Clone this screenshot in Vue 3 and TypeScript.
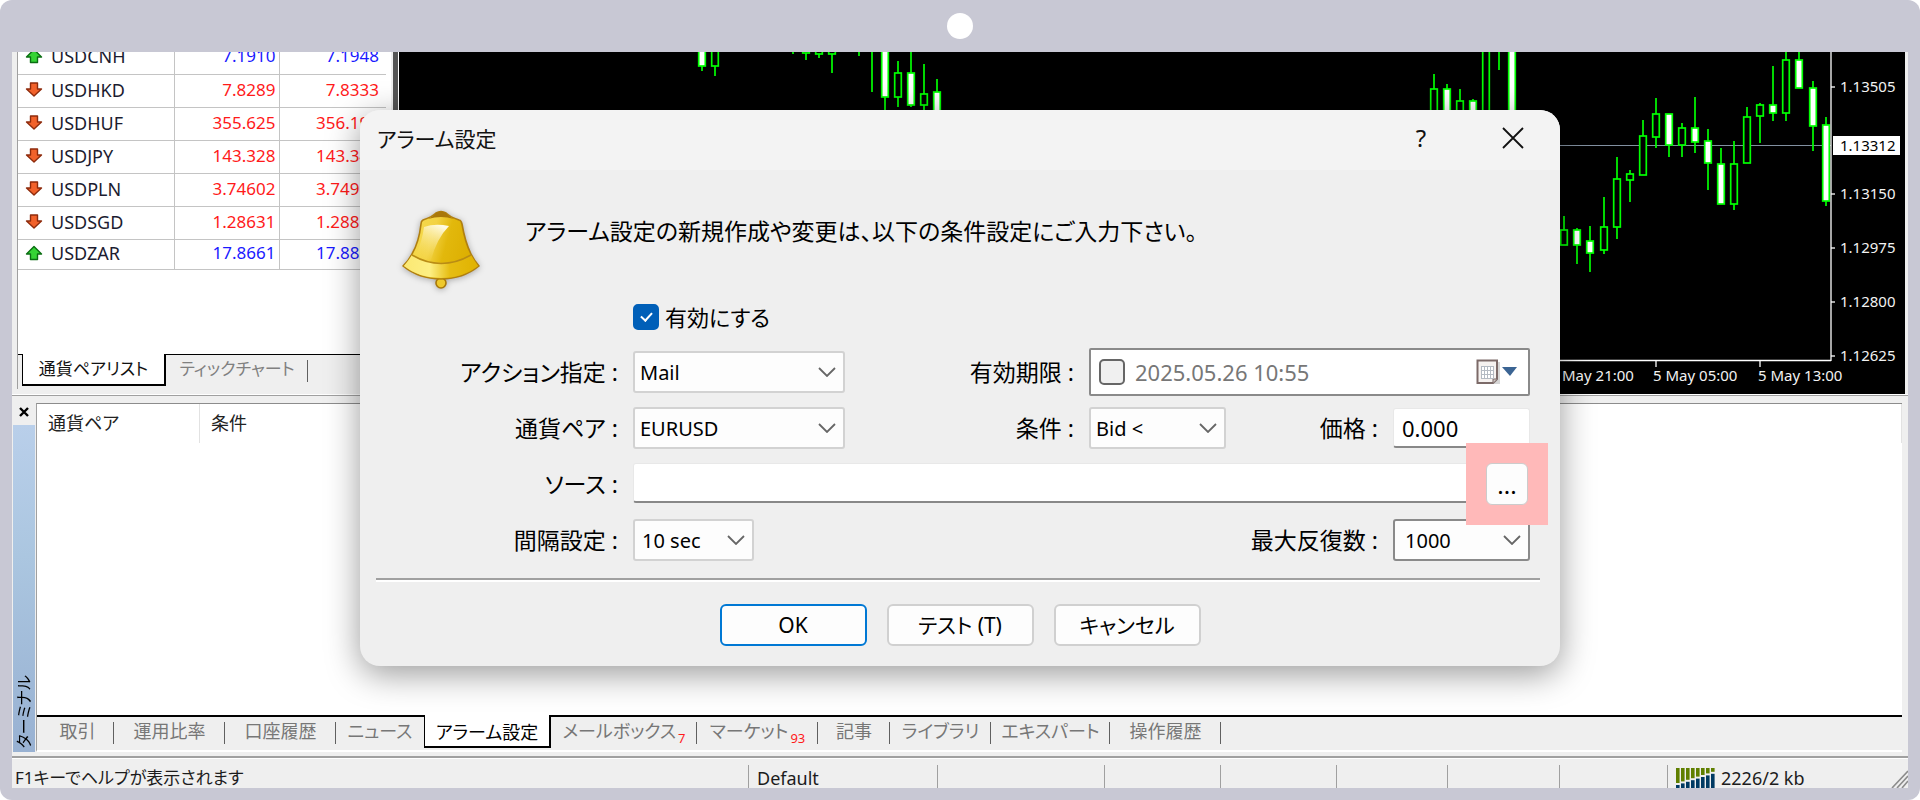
<script setup lang="ts">
import { ref } from 'vue'

interface Quote { symbol: string; bid: string; ask: string; up: boolean }
interface Candle { x: number; high: number; top: number; bottom: number; low: number; filled: boolean }
interface Tab { label: string; width: number; badge?: string; active?: boolean }

const quotes: Quote[] = [
  { symbol: 'USDCNH', bid: '7.1910', ask: '7.1948', up: true },
  { symbol: 'USDHKD', bid: '7.8289', ask: '7.8333', up: false },
  { symbol: 'USDHUF', bid: '355.625', ask: '356.190', up: false },
  { symbol: 'USDJPY', bid: '143.328', ask: '143.340', up: false },
  { symbol: 'USDPLN', bid: '3.74602', ask: '3.74900', up: false },
  { symbol: 'USDSGD', bid: '1.28631', ask: '1.28810', up: false },
  { symbol: 'USDZAR', bid: '17.8661', ask: '17.8810', up: true },
]

const c = (x: number, high: number, top: number, bottom: number, low: number, filled: boolean): Candle =>
  ({ x, high, top, bottom, low, filled })

const candles: Candle[] = [
  c(702, 40, 40, 66, 71, true),
  c(715, 40, 40, 66, 76, false),
  c(793, 40, 40, 41, 54, false),
  c(806, 40, 40, 53, 60, false),
  c(819, 40, 40, 54, 58, false),
  c(832, 40, 40, 54, 73, false),
  c(859, 40, 40, 41, 56, false),
  c(872, 40, 40, 41, 92, false),
  c(885, 40, 40, 97, 112, true),
  c(898, 61, 73, 97, 107, false),
  c(911, 40, 73, 105, 107, true),
  c(924, 64, 94, 105, 112, false),
  c(937, 79, 92, 125, 125, true),
  c(1434, 74, 89, 125, 125, false),
  c(1447, 84, 89, 125, 125, true),
  c(1460, 89, 101, 125, 125, false),
  c(1473, 99, 101, 125, 125, true),
  c(1486, 40, 40, 125, 125, false),
  c(1499, 40, 40, 41, 70, false),
  c(1512, 40, 40, 125, 125, true),
  c(1564, 216, 230, 245, 245, false),
  c(1577, 228, 230, 245, 264, true),
  c(1590, 226, 241, 253, 272, true),
  c(1604, 197, 227, 250, 254, false),
  c(1617, 157, 179, 227, 239, false),
  c(1630, 170, 174, 180, 202, false),
  c(1643, 120, 136, 175, 175, false),
  c(1656, 98, 114, 137, 148, false),
  c(1669, 114, 114, 145, 157, true),
  c(1682, 123, 128, 145, 157, false),
  c(1695, 97, 128, 142, 153, true),
  c(1708, 129, 141, 163, 190, true),
  c(1721, 148, 164, 204, 204, true),
  c(1734, 141, 164, 204, 210, false),
  c(1747, 107, 117, 163, 163, false),
  c(1760, 103, 105, 116, 143, false),
  c(1773, 66, 105, 113, 121, true),
  c(1786, 40, 60, 113, 121, false),
  c(1799, 40, 60, 88, 88, true),
  c(1813, 81, 88, 126, 151, true),
  c(1826, 117, 125, 201, 206, true),
]

const prices = [
  { label: '1.13505', y: 87 },
  { label: '1.13150', y: 194 },
  { label: '1.12975', y: 248 },
  { label: '1.12800', y: 302 },
  { label: '1.12625', y: 356 },
]
const times = [
  { label: 'May 21:00', x: 1562 },
  { label: '5 May 05:00', x: 1653 },
  { label: '5 May 13:00', x: 1758 },
]

const terminalTabs: Tab[] = [
  { label: '取引', width: 73 },
  { label: '運用比率', width: 111 },
  { label: '口座履歴', width: 111 },
  { label: 'ニュース', width: 88 },
  { label: 'アラーム設定', width: 127, active: true },
  { label: 'メールボックス', width: 146, badge: '7' },
  { label: 'マーケット', width: 121, badge: '93' },
  { label: '記事', width: 72 },
  { label: 'ライブラリ', width: 101 },
  { label: 'エキスパート', width: 119 },
  { label: '操作履歴', width: 111 },
]

const trafficBars = [0, 1, 2, 3, 4, 5, 6, 7]

const enabled = ref(true)
const useExpiration = ref(false)
const action = ref('Mail')
const symbol = ref('EURUSD')
const condition = ref('Bid <')
const price = ref('0.000')
const source = ref('')
const interval = ref('10 sec')
const maxRepeat = ref('1000')
</script>

<template>
  <div class="frame">
    <div class="bezel"><span class="camera"></span></div>
    <main class="screen">
      <div class="workspace">
        <section class="market">
          <div class="market-list">
            <table class="quotes">
              <tbody>
                <tr v-for="q in quotes" :key="q.symbol" :class="q.up ? 'up' : 'down'">
                  <td class="symbol">
                    <div class="symbol-in">
                      <svg class="arrow" width="18" height="17" viewBox="0 0 18 17" aria-hidden="true">
                        <path v-if="q.up" d="M9 1.5 L16.5 9 H12.5 V14.5 H5.5 V9 H1.5 Z" fill="#35d335" stroke="#0a6e12" stroke-width="1.4" stroke-linejoin="round" />
                        <path v-else d="M9 15 L16.5 8 H12.5 V2 H5.5 V8 H1.5 Z" fill="#f2622b" stroke="#8e2b0c" stroke-width="1.4" stroke-linejoin="round" />
                      </svg>
                      <span>{{ q.symbol }}</span>
                    </div>
                  </td>
                  <td class="num">{{ q.bid }}</td>
                  <td class="num last">{{ q.ask }}</td>
                </tr>
              </tbody>
            </table>
          </div>
          <nav class="market-tabs">
            <button type="button" class="mtab active">通貨ペアリスト</button>
            <button type="button" class="mtab">ティックチャート</button>
          </nav>
        </section>
        <section class="chart">
          <svg class="chart-svg" viewBox="401 52 1504 342" preserveAspectRatio="xMaxYMin slice" role="img" aria-label="EURUSD">
            <line x1="401" x2="1831" y1="145.5" y2="145.5" stroke="#8290a0" stroke-width="1.2" />
            <g stroke="#00ff00" stroke-width="1.7">
              <g v-for="k in candles" :key="k.x">
                <line :x1="k.x" :x2="k.x" :y1="k.high" :y2="k.top" />
                <line :x1="k.x" :x2="k.x" :y1="k.bottom" :y2="k.low" />
                <rect :x="k.x - 3.3" :y="k.top" width="6.6" :height="k.bottom - k.top" :fill="k.filled ? '#fff' : '#000'" />
              </g>
            </g>
            <g stroke="#fff" stroke-width="1.3">
              <line x1="1831" x2="1831" y1="52" y2="361" />
              <line x1="401" x2="1831" y1="360.5" y2="360.5" />
              <line v-for="p in prices" :key="p.label" x1="1831" x2="1835" :y1="p.y" :y2="p.y" />
              <line x1="1656" x2="1656" y1="361" y2="367" />
              <line x1="1760" x2="1760" y1="361" y2="367" />
            </g>
            <g class="axis">
              <text v-for="p in prices" :key="p.label" x="1840" :y="p.y + 5">{{ p.label }}</text>
              <text v-for="t in times" :key="t.label" :x="t.x" y="381">{{ t.label }}</text>
            </g>
            <rect x="1833" y="136" width="67" height="19" fill="#fff" />
            <text class="current" x="1840" y="151">1.13312</text>
          </svg>
        </section>
      </div>

      <section class="terminal">
        <aside class="rail">
          <button type="button" class="rail-close" aria-label="閉じる">
            <svg width="12" height="10" viewBox="0 0 12 10"><path d="M2 1 L10 9 M10 1 L2 9" stroke="#000" stroke-width="2.4" /></svg>
          </button>
          <div class="rail-title"><span>ターミナル</span></div>
        </aside>
        <div class="terminal-panel">
          <div class="terminal-head">
            <div class="th first">通貨ペア</div>
            <div class="th">条件</div>
          </div>
          <div class="terminal-body"></div>
          <nav class="terminal-tabs">
            <button
              v-for="t in terminalTabs"
              :key="t.label"
              type="button"
              class="ttab"
              :class="{ active: t.active }"
              :style="{ width: t.width + 'px' }"
            >{{ t.label }}<sub v-if="t.badge">{{ t.badge }}</sub></button>
          </nav>
        </div>
      </section>

      <footer class="status">
        <div class="cell help">F1キーでヘルプが表示されます</div>
        <div class="cell">Default</div>
        <div class="cell"></div>
        <div class="cell"></div>
        <div class="cell"></div>
        <div class="cell"></div>
        <div class="cell"></div>
        <div class="cell"></div>
        <div class="cell traffic">
          <svg width="39" height="21" viewBox="0 0 39 21" aria-hidden="true">
            <g v-for="i in trafficBars" :key="i">
              <rect :x="i * 5" y="0" width="3.6" :height="15 - i * 1.6" fill="#5f7f00" />
              <rect :x="i * 5" :y="17 - i * 1.6" width="3.6" :height="4 + i * 1.6" fill="#003a63" />
            </g>
          </svg>
          <span>2226/2 kb</span>
          <svg class="grip" width="17" height="18" viewBox="0 0 17 18" aria-hidden="true">
            <path d="M1 18 L17 1 M6 18 L17 6 M11 18 L17 11" stroke="#8c8c8c" stroke-width="1.6" />
          </svg>
        </div>
      </footer>

      <form class="dialog" role="dialog" aria-labelledby="dlg-title" @submit.prevent>
        <header class="titlebar">
          <h1 id="dlg-title">アラーム設定</h1>
          <button type="button" class="tbtn">?</button>
          <button type="button" class="tbtn" aria-label="閉じる">
            <svg width="22" height="22" viewBox="0 0 22 22"><path d="M1 1 L21 21 M21 1 L1 21" stroke="#111" stroke-width="1.8" /></svg>
          </button>
        </header>

        <div class="intro">
          <svg class="bell" width="80" height="82" viewBox="0 0 80 82" aria-hidden="true">
            <defs>
              <linearGradient id="bellBody" x1="0" x2="1" y1="0" y2="0.25">
                <stop offset="0.1" stop-color="#f6dc4e" />
                <stop offset="0.45" stop-color="#f3d344" />
                <stop offset="0.65" stop-color="#e2b80c" />
                <stop offset="1" stop-color="#dcae00" />
              </linearGradient>
              <linearGradient id="bellRim" x1="0" x2="1" y1="0" y2="0">
                <stop offset="0" stop-color="#fbe873" />
                <stop offset="0.35" stop-color="#fdef83" />
                <stop offset="0.62" stop-color="#e6bd12" />
                <stop offset="1" stop-color="#e0b200" />
              </linearGradient>
              <linearGradient id="bellShine" x1="0.7" x2="0.2" y1="0" y2="1">
                <stop offset="0" stop-color="#fffbe2" />
                <stop offset="1" stop-color="#f7de62" stop-opacity="0" />
              </linearGradient>
            </defs>
            <circle cx="40" cy="73" r="5" fill="#eec92c" stroke="#a87808" stroke-width="1.6" />
            <path d="M22 10 Q31 7 35 3 Q40 0 45 3 Q49 7 58 10 Q60 10 61 14 Q64 32 70 44 Q73 50 78 56 Q62 69 40 69 Q18 69 2 56 Q8 50 11 44 Q18 32 20 14 Q20 11 22 10 Z" fill="url(#bellBody)" stroke="#b07f10" stroke-width="1.6" stroke-linejoin="round" />
            <path d="M11 45 Q40 61 70 45 Q73 50 77 56 Q62 68 40 68 Q18 68 3 56 Q8 50 11 45 Z" fill="url(#bellRim)" />
            <path d="M11 45 Q40 62 70 45" fill="none" stroke="#b98c14" stroke-width="1.5" />
            <path d="M23 17 Q34 13 48 16 Q36 28 30 50 Q21 49 15 44 Q21 32 23 17 Z" fill="url(#bellShine)" />
            <path d="M27 9 Q33 6 35 3 Q40 0 45 3 Q47 6 53 9 Q40 5 27 9 Z" fill="#a9770a" />
          </svg>
          <p>アラーム設定の新規作成や変更は、以下の条件設定にご入力下さい。</p>
        </div>

        <div class="fields">
          <div class="enable">
            <input id="enabled" v-model="enabled" type="checkbox" class="check" />
            <label for="enabled">有効にする</label>
          </div>

          <label class="lbl c1" for="action">アクション指定 :</label>
          <div class="combo c2">
            <select id="action" v-model="action"><option>Mail</option></select>
            <svg class="chev" width="18" height="10" viewBox="0 0 18 10"><path d="M1 1 L9 9 L17 1" /></svg>
          </div>
          <label class="lbl c3" for="expiration">有効期限 :</label>
          <div class="date c4">
            <input v-model="useExpiration" type="checkbox" class="check" aria-label="有効期限" />
            <input id="expiration" class="date-text" type="text" value="2025.05.26 10:55" />
            <button type="button" class="date-btn" aria-label="カレンダー">
              <svg width="42" height="28" viewBox="0 0 42 28">
                <path d="M3 4 H24 V26 H3 Z" fill="#bbb" opacity="0.6" />
                <path d="M1.5 2.5 H21 V21 L17 25 H1.5 Z" fill="#f6f2f0" stroke="#7c6a68" stroke-width="2" />
                <path d="M21 21 H17 V25" fill="#cfc8c6" stroke="#7c6a68" stroke-width="1" />
                <rect x="5" y="8" width="13" height="13" fill="#b4bac2" />
                <g fill="#fff">
                  <rect v-for="n in 12" :key="n" :x="6 + ((n - 1) % 4) * 3" :y="9 + Math.floor((n - 1) / 4) * 4" width="2" height="3" />
                </g>
                <path d="M26 9 H41 L34 18 Z" fill="#3b6493" />
              </svg>
            </button>
          </div>

          <label class="lbl c1" for="symbol">通貨ペア :</label>
          <div class="combo c2">
            <select id="symbol" v-model="symbol"><option>EURUSD</option></select>
            <svg class="chev" width="18" height="10" viewBox="0 0 18 10"><path d="M1 1 L9 9 L17 1" /></svg>
          </div>
          <label class="lbl c3" for="condition">条件 :</label>
          <div class="combo c4s">
            <select id="condition" v-model="condition"><option>Bid &lt;</option></select>
            <svg class="chev" width="18" height="10" viewBox="0 0 18 10"><path d="M1 1 L9 9 L17 1" /></svg>
          </div>
          <label class="lbl c5" for="price">価格 :</label>
          <input id="price" v-model="price" class="text c6" type="text" />

          <label class="lbl c1" for="source">ソース :</label>
          <div class="source">
            <input id="source" v-model="source" class="text" type="text" />
            <div class="spot"><button type="button" class="browse">...</button></div>
          </div>

          <label class="lbl c1" for="interval">間隔設定 :</label>
          <div class="combo short c2">
            <select id="interval" v-model="interval"><option>10 sec</option></select>
            <svg class="chev" width="18" height="10" viewBox="0 0 18 10"><path d="M1 1 L9 9 L17 1" /></svg>
          </div>
          <label class="lbl wide" for="repeat">最大反復数 :</label>
          <div class="combo strong c6">
            <select id="repeat" v-model="maxRepeat"><option>1000</option></select>
            <svg class="chev" width="18" height="10" viewBox="0 0 18 10"><path d="M1 1 L9 9 L17 1" /></svg>
          </div>
        </div>

        <hr class="rule" />
        <div class="actions">
          <button type="submit" class="btn primary">OK</button>
          <button type="button" class="btn">テスト (T)</button>
          <button type="button" class="btn">キャンセル</button>
        </div>
      </form>
    </main>
  </div>
</template>

<style>
body {
  margin: 0;
  background: #fff;
}
</style>

<style scoped>
.frame {
  box-sizing: border-box;
  min-height: 100vh;
  padding: 0 12px 12px;
  display: flex;
  flex-direction: column;
  background: #c8c8d4;
  border-radius: 12px;
  font-family: "Noto Sans", "Noto Sans CJK JP", sans-serif;
  font-feature-settings: "palt";
  color: #000;
}
.frame *,
.frame *::before {
  box-sizing: border-box;
}
button,
input,
select {
  font-family: inherit;
  font-feature-settings: inherit;
  margin: 0;
}
button {
  border: 0;
  background: none;
  padding: 0;
  color: inherit;
}
.bezel {
  height: 52px;
  display: flex;
  align-items: center;
  justify-content: center;
}
.camera {
  width: 26px;
  height: 26px;
  border-radius: 50%;
  background: #fff;
}
.screen {
  position: relative;
  flex: 1;
  display: flex;
  flex-direction: column;
  background: #efefef;
  overflow: hidden;
}

/* market watch and chart */
.workspace {
  flex: none;
  height: 343px;
  display: flex;
  border-bottom: 1px solid #fff;
}
.market {
  width: 374px;
  margin-left: 5px;
  margin-bottom: 5px;
  display: flex;
  flex-direction: column;
  border-left: 1px solid #a0a0a0;
  overflow: hidden;
}
.market-list {
  flex: 1;
  background: #fff;
  overflow: hidden;
}
.quotes {
  width: 368px;
  margin-top: -11px;
  border-collapse: collapse;
  table-layout: fixed;
  line-height: 24px;
}
.quotes tr {
  height: 33px;
}
.quotes tr:last-child {
  height: 30px;
}
.quotes td {
  padding: 0 0 2px;
  border-bottom: 1px solid #c4c4c4;
  font-size: 17px;
}
.quotes .symbol {
  width: 156px;
  font-size: 18px;
  color: #1c1c30;
}
.symbol-in {
  display: flex;
  align-items: center;
  gap: 8px;
  padding-left: 7px;
}
.quotes .num {
  width: 105px;
  padding-right: 3px;
  text-align: right;
  border-left: 1px solid #c4c4c4;
}
.quotes .last {
  width: 107px;
  padding-right: 7px;
}
.up .num {
  color: #1a1aff;
}
.down .num {
  color: #ff1a1a;
}
.market-tabs {
  height: 35px;
  display: flex;
  align-items: flex-start;
  padding-left: 4px;
  border-top: 1px solid #000;
}
.mtab {
  position: relative;
  width: 142px;
  height: 28px;
  font-size: 17px;
  line-height: 28px;
  color: #808080;
  white-space: nowrap;
}
.mtab.active {
  width: 144px;
  height: 32px;
  margin-top: -1px;
  background: #fff;
  color: #111;
  border: 1px solid #000;
  border-top: 0;
  border-right-width: 2px;
  border-bottom-width: 2px;
}
.chart {
  flex: 1;
  min-width: 0;
  margin-left: 2px;
  margin-right: 3px;
  background: #000;
  border-left: 5px solid #555;
  box-shadow: inset 1px 0 0 #fff;
  overflow: hidden;
  padding-left: 3px;
}
.chart-svg {
  display: block;
  width: 100%;
  height: 342px;
}
.axis text {
  font-size: 15px;
  fill: #f2f2f2;
}
.current {
  font-size: 15px;
  fill: #000;
}

/* terminal */
.terminal {
  flex: 1;
  display: flex;
  border-top: 1px solid #a0a0a0;
  padding-top: 7px;
  border-bottom: 2px solid #a0a0a0;
  padding-bottom: 4px;
}
.rail {
  width: 24px;
  display: flex;
  flex-direction: column;
}
.rail-close {
  height: 22px;
  line-height: 0;
  padding-bottom: 4px;
}
.rail-title {
  flex: 1;
  width: 22px;
  margin-left: 1px;
  display: flex;
  align-items: flex-end;
  background: linear-gradient(#b9cfea, #abc6e0 40%, #98b1d2);
}
.rail-title span {
  writing-mode: vertical-rl;
  text-orientation: sideways;
  transform: rotate(180deg);
  font-size: 16px;
  line-height: 22px;
  padding-top: 4px;
}
.terminal-panel {
  flex: 1;
  min-width: 0;
  display: flex;
  flex-direction: column;
  margin-right: 6px;
  border-left: 1px solid #a0a0a0;
  border-top: 1px solid #8c8c8c;
  border-bottom: 2px solid #fff;
}
.terminal-head {
  display: flex;
  height: 39px;
  background: #fff;
  border-right: 1px solid #e2e2e2;
}
.th {
  padding-left: 11px;
  font-size: 18px;
  line-height: 38px;
  color: #222;
}
.th.first {
  width: 163px;
  border-right: 1px solid #e2e2e2;
}
.terminal-body {
  flex: 1;
  background: #fff;
}
.terminal-tabs {
  height: 35px;
  display: flex;
  align-items: flex-start;
  padding-left: 4px;
  border-top: 2px solid #000;
}
.ttab {
  position: relative;
  height: 28px;
  font-size: 18px;
  line-height: 28px;
  color: #777;
  white-space: nowrap;
  text-align: center;
}
.ttab::after,
.mtab::after {
  content: "";
  position: absolute;
  right: 0;
  top: 5px;
  width: 1px;
  height: 22px;
  background: #606060;
}
.ttab:nth-child(4)::after,
.mtab.active::after,
.ttab.active::after {
  display: none;
}
.ttab.active {
  height: 33px;
  margin-top: -2px;
  padding-top: 2px;
  background: #fff;
  color: #000;
  border: 1px solid #000;
  border-top: 0;
  border-right-width: 2px;
  border-bottom-width: 2px;
}
.ttab sub {
  font-size: 13px;
  line-height: 12px;
  color: #ff1a1a;
  margin-left: 2px;
}

/* status bar */
.status {
  flex: none;
  height: 30px;
  padding-top: 6px;
  display: grid;
  grid-template-columns: 736fr 189fr 167fr 116fr 116fr 111fr 112fr 108fr 241fr;
  border-top: 1px solid #fff;
  overflow: hidden;
}
.cell {
  min-width: 0;
  padding-left: 8px;
  border-left: 1px solid #a0a0a0;
  font-size: 18px;
  line-height: 26px;
  white-space: nowrap;
  color: #1c1c1c;
}
.cell.help {
  border-left: 0;
  padding-left: 3px;
  font-size: 17px;
}
.traffic {
  display: flex;
  align-items: flex-start;
  gap: 6px;
}
.traffic svg {
  flex: none;
  margin-top: 3px;
}
.traffic .grip {
  margin-left: auto;
  margin-top: 5px;
}

/* alarm dialog */
.dialog {
  position: absolute;
  top: 58px;
  left: 50%;
  width: 1200px;
  max-width: 94%;
  transform: translateX(-50%);
  background: #efefef;
  border-radius: 20px;
  box-shadow: 0 8px 34px rgba(0, 0, 0, 0.4);
}
.titlebar {
  height: 60px;
  display: flex;
  align-items: center;
  padding: 0 24px 4px 17px;
  background: #f3f3f3;
  border-radius: 20px 20px 0 0;
}
.titlebar h1 {
  flex: 1;
  margin: 0;
  font-size: 21px;
  font-weight: 400;
  color: #111;
}
.tbtn {
  width: 46px;
  height: 40px;
  font-size: 24px;
  line-height: 0;
  color: #111;
}
.tbtn + .tbtn {
  margin-left: 46px;
}
.intro {
  display: flex;
  padding: 40px 20px 0 41px;
  height: 134px;
}
.bell {
  flex: none;
  filter: drop-shadow(0 1px 3px rgba(0, 0, 0, 0.3));
}
.intro p {
  margin: 3px 0 0 44px;
  font-size: 23px;
  line-height: 36px;
  white-space: nowrap;
}
.fields {
  display: grid;
  grid-template-columns: 273fr 212fr 244fr 137fr 167fr 137fr;
  grid-template-rows: 33px;
  grid-auto-rows: 42px;
  row-gap: 14px;
  align-items: center;
  padding-right: 30px;
}
.enable {
  grid-column: 2 / 4;
  display: flex;
  align-items: center;
  gap: 6px;
  height: 26px;
  align-self: start;
  font-size: 22px;
  line-height: 26px;
}
.lbl {
  justify-self: end;
  padding-right: 15px;
  font-size: 23px;
  line-height: 32px;
  white-space: nowrap;
}
.c1 { grid-column: 1; }
.c2 { grid-column: 2; }
.c3 { grid-column: 3; }
.c4 { grid-column: 4 / 7; }
.c4s { grid-column: 4; }
.c5 { grid-column: 5; }
.c6 { grid-column: 6; }
.wide { grid-column: 3 / 6; }
.check {
  flex: none;
  appearance: none;
  position: relative;
  width: 26px;
  height: 26px;
  border: 2px solid #666;
  border-radius: 5px;
  background: #f0f0f0;
}
.check:checked {
  border-color: #005fb8;
  background: #005fb8;
}
.check:checked::after {
  content: "";
  position: absolute;
  left: 8px;
  top: 4px;
  width: 5px;
  height: 9px;
  border: solid #fff;
  border-width: 0 2px 2px 0;
  transform: rotate(42deg);
}
.combo {
  position: relative;
  height: 42px;
}
.combo.short {
  width: 121px;
}
.combo select {
  appearance: none;
  width: 100%;
  height: 100%;
  padding: 0 30px 0 5px;
  border: 2px solid #d2d2d2;
  border-radius: 3px;
  background: #fdfdfd;
  font-size: 20px;
  color: #000;
}
.combo.short select {
  padding-left: 7px;
}
.combo.strong select {
  padding-left: 10px;
  border-color: #8a8a8a;
}
.chev {
  position: absolute;
  right: 9px;
  top: 16px;
  fill: none;
  stroke: #666;
  stroke-width: 1.8;
  pointer-events: none;
}
.text {
  width: 100%;
  min-width: 0;
  height: 40px;
  padding: 0 8px;
  border: 1px solid #e8e8e8;
  border-bottom: 2px solid #888;
  border-radius: 3px;
  background: #fff;
  font-size: 22px;
  color: #000;
}
.date {
  height: 48px;
  display: flex;
  align-items: center;
  padding: 0 10px 0 8px;
  border: 2px solid #8a8a8a;
  border-radius: 2px;
  background: #fff;
}
.date-text {
  flex: 1;
  min-width: 0;
  padding: 0 0 0 10px;
  border: 0;
  background: none;
  font-size: 22px;
  color: #777;
}
.date-btn {
  line-height: 0;
}
.source {
  grid-column: 2 / 7;
  display: flex;
}
.source .text {
  flex: 1;
}
.spot {
  position: relative;
  z-index: 1;
  margin-left: 4px;
  margin-right: 2px;
}
.spot::before {
  content: "";
  position: absolute;
  inset: -20px;
  background: #ffb9b9;
}
.browse {
  position: relative;
  display: block;
  width: 42px;
  height: 42px;
  border: 1px solid #ccc;
  border-radius: 6px;
  background: #fdfdfd;
  font-size: 24px;
}
.rule {
  height: 4px;
  margin: 17px 20px 22px 16px;
  border: 0;
  border-top: 2px solid #a0a0a0;
  background: #fff;
}
.actions {
  display: flex;
  justify-content: center;
  gap: 20px;
  padding-bottom: 20px;
}
.btn {
  width: 147px;
  height: 42px;
  border: 2px solid #d0d0d0;
  border-radius: 6px;
  background: #fdfdfd;
  font-size: 21px;
  line-height: 30px;
}
.btn.primary {
  border-color: #0078d4;
}
</style>
